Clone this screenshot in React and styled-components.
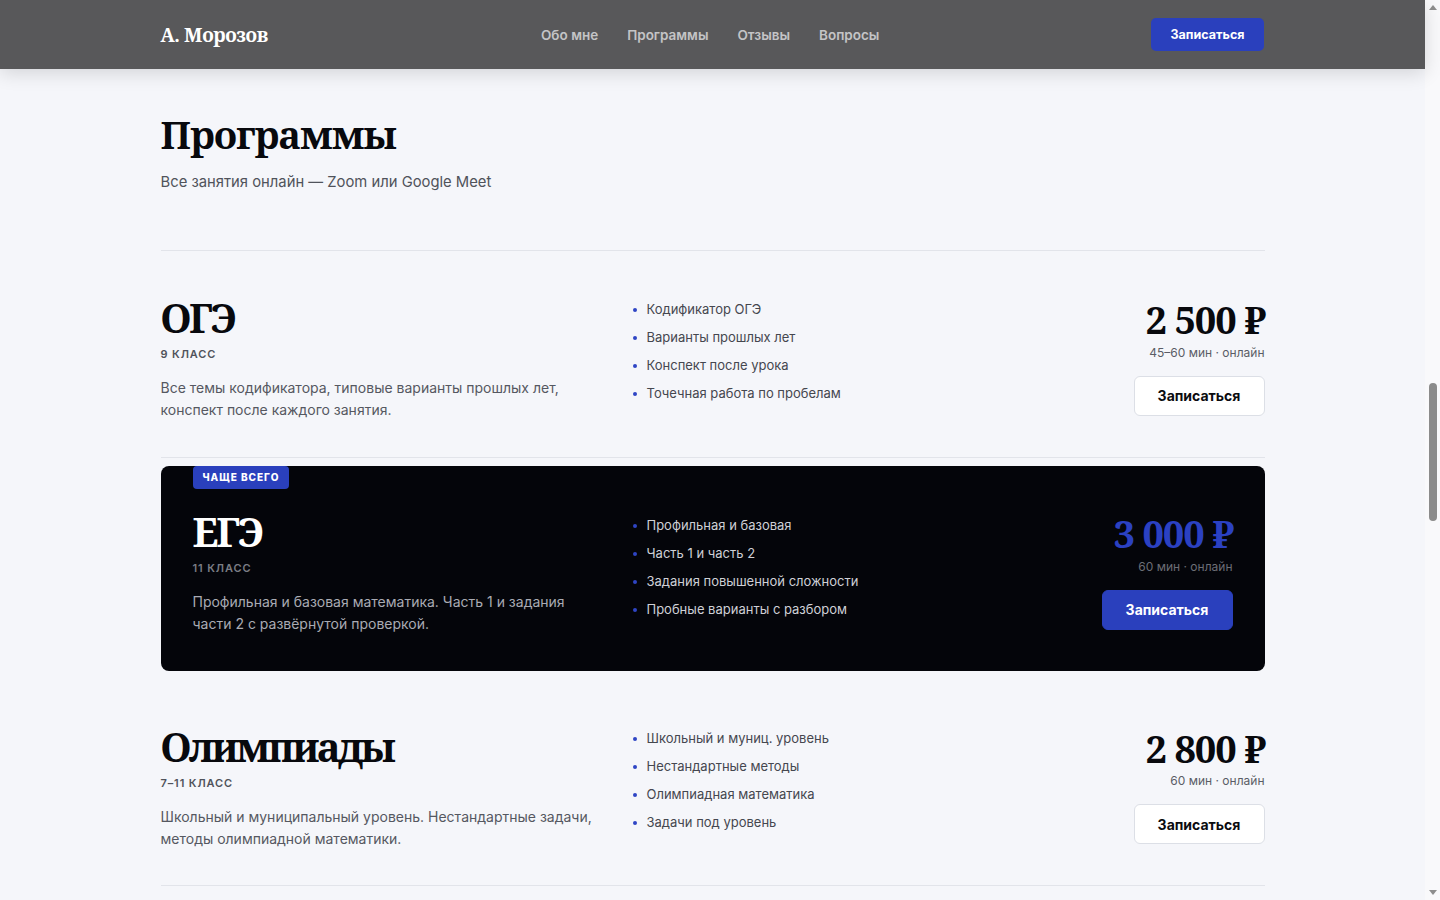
import React from 'react';
import styled, { createGlobalStyle } from 'styled-components';

const GlobalStyle = createGlobalStyle`
  body {
    margin: 0;
    background: #f5f6fa;
    font-family: Inter, "Noto Sans", sans-serif;
    color: #0b0c10;
  }
  * { box-sizing: border-box; }
`;

const programs = [
  {
    title: 'ОГЭ',
    grade: '9 класс',
    text: 'Все темы кодификатора, типовые варианты прошлых лет, конспект после каждого занятия.',
    points: ['Кодификатор ОГЭ', 'Варианты прошлых лет', 'Конспект после урока', 'Точечная работа по пробелам'],
    price: '2 500 ₽',
    meta: '45–60 мин · онлайн',
  },
  {
    title: 'ЕГЭ',
    grade: '11 класс',
    text: 'Профильная и базовая математика. Часть 1 и задания части 2 с развёрнутой проверкой.',
    points: ['Профильная и базовая', 'Часть 1 и часть 2', 'Задания повышенной сложности', 'Пробные варианты с разбором'],
    price: '3 000 ₽',
    meta: '60 мин · онлайн',
    featured: true,
  },
  {
    title: 'Олимпиады',
    grade: '7–11 класс',
    text: 'Школьный и муниципальный уровень. Нестандартные задачи, методы олимпиадной математики.',
    points: ['Школьный и муниц. уровень', 'Нестандартные методы', 'Олимпиадная математика', 'Задачи под уровень'],
    price: '2 800 ₽',
    meta: '60 мин · онлайн',
  },
];

export default function App() {
  return (
    <Shell>
      <GlobalStyle />
      <Page>
        <Header>
          <HeaderInner>
            <Logo>А. Морозов</Logo>
            <Nav>
              <NavLink>Обо мне</NavLink>
              <NavLink>Программы</NavLink>
              <NavLink>Отзывы</NavLink>
              <NavLink>Вопросы</NavLink>
            </Nav>
            <HeaderButton>Записаться</HeaderButton>
          </HeaderInner>
        </Header>

        <Section>
          <Container>
            <SectionTitle>Программы</SectionTitle>
            <Lead>Все занятия онлайн — Zoom или Google Meet</Lead>

            <List>
              {programs.map(p => (
                <Row key={p.title} $featured={p.featured}>
                  {p.featured && <Badge>Чаще всего</Badge>}
                  <Info>
                    <Title $featured={p.featured}>{p.title}</Title>
                    <Grade $featured={p.featured}>{p.grade}</Grade>
                    <Desc $featured={p.featured}>{p.text}</Desc>
                  </Info>
                  <Points $featured={p.featured}>
                    {p.points.map(pt => (
                      <Point key={pt} $featured={p.featured}>{pt}</Point>
                    ))}
                  </Points>
                  <Side>
                    <Price $featured={p.featured}>{p.price}</Price>
                    <Meta $featured={p.featured}>{p.meta}</Meta>
                    <SignUp $featured={p.featured}>Записаться</SignUp>
                  </Side>
                </Row>
              ))}
            </List>
          </Container>
        </Section>
      </Page>

      <ScrollRail>
        <Arrow />
        <Thumb />
        <Arrow $down />
      </ScrollRail>
    </Shell>
  );
}

const Shell = styled.div`
  display: flex;
  align-items: flex-start;
  min-height: 100vh;
`;

const Page = styled.div`
  flex: 1;
  min-width: 0;
`;

// the browser scrollbar seen on the right edge of the page
const ScrollRail = styled.div`
  position: sticky;
  top: 0;
  width: 15px;
  height: 100vh;
  flex-shrink: 0;
  display: flex;
  flex-direction: column;
  align-items: center;
  background: #f9f9fb;
`;

const Arrow = styled.div`
  width: 0;
  height: 0;
  margin: ${p => (p.$down ? 'auto 0 5px' : '5px 0 0')};
  border-left: 4px solid transparent;
  border-right: 4px solid transparent;
  border-${p => (p.$down ? 'top' : 'bottom')}: 5px solid #8e8e8e;
`;

const Thumb = styled.div`
  width: 8px;
  height: 138px;
  margin-top: 373px;
  border-radius: 4px;
  background: #8b8b8b;
`;

const Header = styled.header`
  position: sticky;
  top: 0;
  z-index: 10;
  height: 69px;
  background: #58585a;
  box-shadow: 0 4px 18px rgba(0, 0, 0, 0.14);
`;

const HeaderInner = styled.div`
  max-width: 1104px;
  height: 100%;
  margin: 0 auto;
  display: flex;
  align-items: center;
  justify-content: space-between;
`;

const Logo = styled.div`
  font-family: "Noto Serif", "Liberation Serif", serif;
  font-weight: 700;
  font-size: 19px;
  letter-spacing: -0.02em;
  color: #fff;
`;

const Nav = styled.nav`
  display: flex;
  gap: 29px;
  margin-left: 2px;
`;

const NavLink = styled.a`
  font-size: 13.5px;
  font-weight: 600;
  color: #c4c4c6;
  cursor: pointer;
`;

const HeaderButton = styled.button`
  height: 33px;
  padding: 0 20px;
  border: none;
  border-radius: 5px;
  background: #2a40bd;
  color: #fff;
  font-family: Inter, sans-serif;
  font-size: 12.5px;
  font-weight: 700;
  cursor: pointer;
`;

const Section = styled.section`
  padding: 45px 0 0;
`;

const Container = styled.div`
  max-width: 1104px;
  margin: 0 auto;
`;

const SectionTitle = styled.h2`
  margin: 0;
  font-family: "Noto Serif", "Liberation Serif", serif;
  font-weight: 700;
  font-size: 38px;
  line-height: 1.1;
  letter-spacing: -0.02em;
  color: #08090d;
`;

const Lead = styled.p`
  margin: 15px 0 0;
  font-size: 14.8px;
  line-height: 1.5;
  color: #50535b;
`;

const List = styled.div`
  margin-top: 57px;
  border-top: 1px solid #e2e4ea;
`;

const Row = styled.div`
  position: relative;
  display: grid;
  grid-template-columns: 1fr 1fr 160px;
  column-gap: 40px;
  align-items: start;
  padding: ${p => (p.$featured ? '44px 32px 35px' : '45px 0 35px')};
  margin: ${p => (p.$featured ? '8px 0 9px' : '0')};
  background: ${p => (p.$featured ? '#04050a' : 'transparent')};
  border-radius: ${p => (p.$featured ? '8px' : '0')};
  border-bottom: ${p => (p.$featured ? 'none' : '1px solid #e2e4ea')};
`;

const Badge = styled.span`
  position: absolute;
  top: 0;
  left: 32px;
  height: 23px;
  padding: 0 10px;
  display: flex;
  align-items: center;
  border-radius: 4px;
  background: #2a40bd;
  color: #fff;
  font-size: 10px;
  font-weight: 800;
  letter-spacing: 0.1em;
  text-transform: uppercase;
`;

const Info = styled.div`
  display: flex;
  flex-direction: column;
`;

const Title = styled.h3`
  margin: 0;
  font-family: "Noto Serif", "Liberation Serif", serif;
  font-weight: 700;
  font-size: 40px;
  line-height: 1.1;
  letter-spacing: -0.06em;
  color: ${p => (p.$featured ? '#fff' : '#08090d')};
`;

const Grade = styled.div`
  margin-top: 6px;
  font-size: 11px;
  line-height: 16px;
  font-weight: 600;
  letter-spacing: 0.08em;
  text-transform: uppercase;
  color: ${p => (p.$featured ? '#7b7d85' : '#50535b')};
`;

const Desc = styled.p`
  margin: 15px 0 0;
  font-size: 14px;
  line-height: 1.6;
  color: ${p => (p.$featured ? '#a9abb3' : '#555861')};
`;

const Points = styled.ul`
  margin: ${p => (p.$featured ? '5px' : '3px')} 0 0;
  padding: 0;
  list-style: none;
  display: flex;
  flex-direction: column;
  gap: 8px;
`;

const Point = styled.li`
  display: flex;
  align-items: center;
  gap: 10px;
  font-size: 13px;
  line-height: 20px;
  color: ${p => (p.$featured ? '#cfd0d6' : '#45474f')};

  &::before {
    content: '';
    width: 4px;
    height: 4px;
    border-radius: 50%;
    background: #2f45c4;
    flex-shrink: 0;
    margin-top: 2px;
  }
`;

const Side = styled.div`
  display: flex;
  flex-direction: column;
  align-items: flex-end;
`;

const Price = styled.div`
  margin-top: 3px;
  margin-right: -1px;
  font-family: "Noto Serif", "Liberation Serif", serif;
  font-weight: 700;
  font-size: 38px;
  line-height: 1.1;
  letter-spacing: -0.03em;
  white-space: nowrap;
  color: ${p => (p.$featured ? '#2b41c2' : '#08090d')};
`;

const Meta = styled.div`
  margin-top: 3px;
  font-size: 12px;
  line-height: 18px;
  color: ${p => (p.$featured ? '#6c6e76' : '#5a5d66')};
`;

const SignUp = styled.button`
  margin-top: 14px;
  width: 131px;
  height: 40px;
  border-radius: 6px;
  border: 1px solid ${p => (p.$featured ? '#2a40bd' : '#dcdfe6')};
  background: ${p => (p.$featured ? '#2a40bd' : '#fff')};
  color: ${p => (p.$featured ? '#fff' : '#0b0c10')};
  font-family: Inter, sans-serif;
  font-size: 14px;
  font-weight: 700;
  cursor: pointer;
`;
